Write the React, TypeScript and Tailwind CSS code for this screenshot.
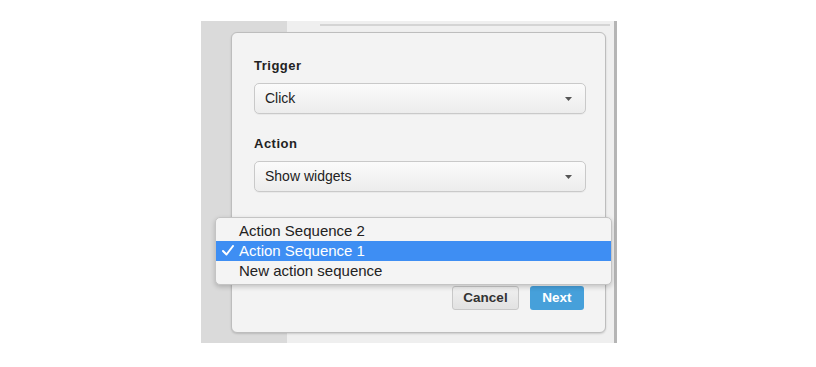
import React from "react";

function Caret() {
  return (
    <svg width="7" height="4" viewBox="0 0 7 4" className="shrink-0">
      <path d="M0 0 L7 0 L3.5 4 Z" fill="#555" />
    </svg>
  );
}

function SelectBox({ value }: { value: string }) {
  return (
    <div className="flex h-[31px] w-[332px] items-center justify-between rounded-[5px] border border-[#c9c9c9] bg-gradient-to-b from-[#fbfbfb] to-[#ececec] pl-[10px] pr-[13px] text-[14px] text-[#222] shadow-[0_1px_0_rgba(0,0,0,0.04)]">
      <span>{value}</span>
      <Caret />
    </div>
  );
}

export default function App() {
  return (
    <div
      className="h-[367px] w-[816px] bg-white"
      style={{ fontFamily: '"Liberation Sans", Arial, sans-serif' }}
    >
      <div className="pl-[201px] pt-[21px]">
        <div className="relative flex h-[322px] w-[416px]">
          <div className="h-full w-[86px] bg-[#dadada]" />
          <div className="flex h-full flex-1 flex-col bg-[#efefef]">
            <div className="ml-[33px] mt-[3px] h-[2px] w-[290px] border-y border-[#d4d4d4] bg-[#f7f7f7]" />
          </div>
          <div className="h-full w-[3px] bg-[#b5b5b5]" />

          {/* dialog */}
          <div className="absolute left-[30px] top-[11px] flex h-[301px] w-[375px] flex-col rounded-[6px] border border-[#bdbdbd] bg-[#f3f3f3] pl-[22px] pt-[25px] shadow-[0_1px_2px_rgba(0,0,0,0.15)]">
            <div className="text-[13px] font-bold leading-[16px] tracking-[0.5px] text-[#222]">Trigger</div>
            <div className="mt-[9px]">
              <SelectBox value="Click" />
            </div>
            <div className="mt-[22px] text-[13px] font-bold leading-[16px] tracking-[0.5px] text-[#222]">Action</div>
            <div className="mt-[9px]">
              <SelectBox value="Show widgets" />
            </div>
            <div className="mt-[22px] text-[13px] font-bold leading-[16px] tracking-[0.5px] text-[#222]">Add to</div>
            <div className="mt-[56px] flex justify-end gap-[11px] pr-[21px]">
              <div className="flex h-[24px] w-[67px] items-center justify-center rounded-[3px] border border-[#c8c8c8] bg-gradient-to-b from-[#f0f0f0] to-[#e2e2e2] text-[13.5px] font-bold text-[#333]">
                Cancel
              </div>
              <div className="flex h-[24px] w-[54px] items-center justify-center rounded-[3px] bg-[#46a0da] text-[13.5px] font-bold text-white">
                Next
              </div>
            </div>
          </div>

          {/* dropdown menu */}
          <div className="absolute left-[14px] top-[196px] w-[397px] rounded-[5px] border border-[#c4c4c4] bg-[#f4f4f4] py-[3px] text-[15px] text-[#222] shadow-[0_2px_5px_rgba(0,0,0,0.2)]">
            <div className="flex h-[20px] items-center pl-[23px]">Action Sequence 2</div>
            <div className="relative flex h-[20px] items-center bg-[#3e8ef3] pl-[23px] text-white">
              <svg width="12" height="11" viewBox="0 0 12 11" className="absolute left-[6px] top-[4px]">
                <path d="M1 6 L4.5 9.5 L11 1" fill="none" stroke="white" strokeWidth="2" strokeLinecap="round" strokeLinejoin="round" />
              </svg>
              Action Sequence 1
            </div>
            <div className="flex h-[20px] items-center pl-[23px]">New action sequence</div>
          </div>
        </div>
      </div>
    </div>
  );
}
